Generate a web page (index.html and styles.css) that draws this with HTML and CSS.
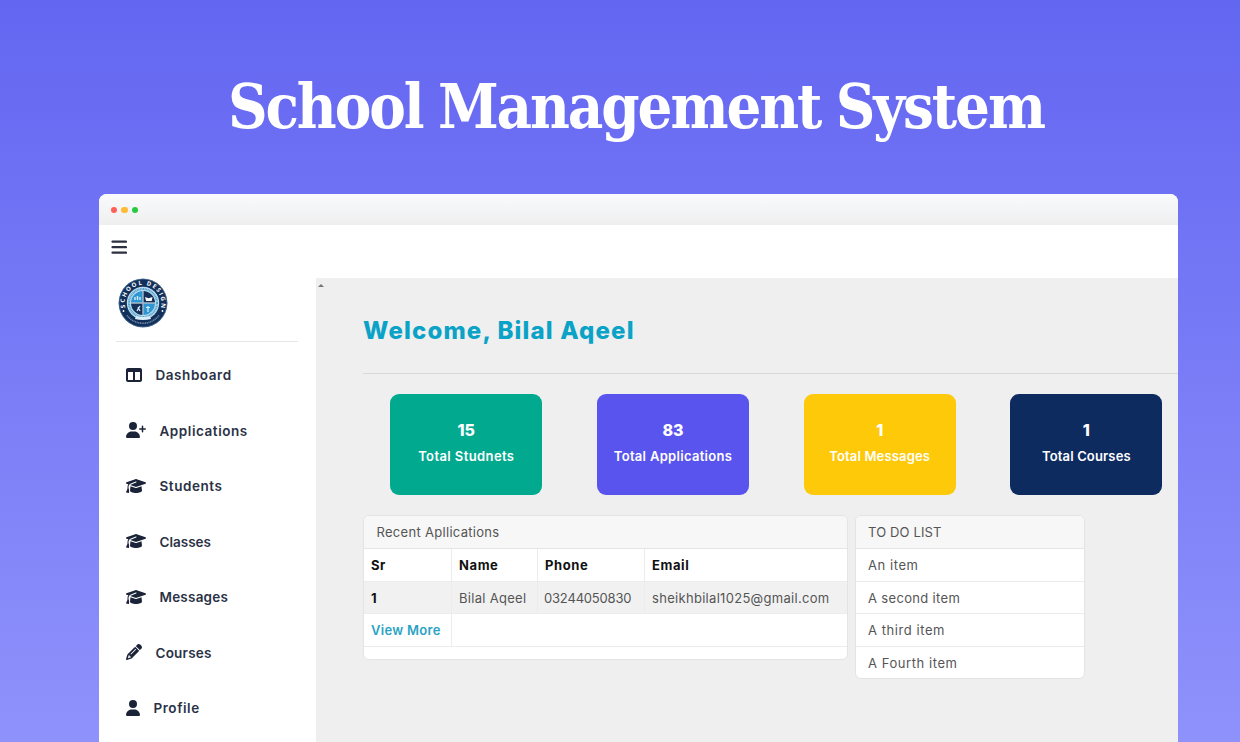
FILE: index.html
```html
<!DOCTYPE html>
<html lang="en">
<head>
<meta charset="utf-8">
<title>School Management System</title>
<link rel="stylesheet" href="styles.css">
</head>
<body>
<svg class="defs" width="0" height="0">
  <symbol id="cap" viewBox="0 0 640 512"><path d="M320 32c-8.1 0-16.1 1.4-23.7 4.1L15.8 137.4C6.3 140.9 0 149.9 0 160s6.3 19.1 15.8 22.6l57.9 20.9C57.3 229.3 48 259.8 48 291.9v28.1c0 28.4-10.8 57.7-22.3 80.8c-6.5 13-13.9 25.8-22.5 37.6C0 442.7-.9 448.3 .9 453.4s6 8.9 11.2 10.2l64 16c4.2 1.1 8.7 .3 12.4-2s6.3-6.1 7.1-10.4c8.6-42.8 4.3-81.2-2.1-108.7C90.3 344.3 86 329.8 80 316.5V291.9c0-30.2 10.2-58.7 27.9-81.5c12.9-15.5 29.6-28 49.2-35.7l157-61.7c8.2-3.2 17.5 .8 20.7 9s-.8 17.5-9 20.7l-157 61.7c-12.4 4.9-23.3 12.4-32.2 21.6l159.6 57.6c7.6 2.7 15.6 4.1 23.7 4.1s16.1-1.4 23.7-4.1L624.2 182.6c9.5-3.4 15.8-12.5 15.8-22.6s-6.3-19.1-15.8-22.6L343.7 36.1C336.1 33.4 328.1 32 320 32zM128 408c0 35.3 86 72 192 72s192-36.7 192-72L496.7 262.6 354.5 314c-11.1 4-22.8 6-34.5 6s-23.5-2-34.5-6L143.3 262.6 128 408z"/></symbol>
</svg>
<h1 class="title">School Management System</h1>
<div class="window">
  <div class="titlebar"><i class="dot red"></i><i class="dot amber"></i><i class="dot green"></i></div>
  <header class="topbar">
    <svg class="burger" viewBox="0 0 16 16"><path d="M1.500 1.700h13.500M1.500 7.200h13.500M1.500 12.700h13.500"/></svg>
  </header>
  <div class="body">
    <aside class="sidebar">
      <svg class="logo" viewBox="0 0 50 50">
        <defs>
          <path id="arcTop" d="M7.500 30.500 A18.300 18.300 0 1 1 42.500 30.500"/>
        </defs>
        <circle cx="25" cy="25" r="24.300" fill="#12305a"/>
        <circle cx="25" cy="25" r="24" fill="none" stroke="#5f87aa" stroke-width=".6"/>
        <circle cx="25" cy="25" r="16.200" fill="#b9dcef"/>
        <circle cx="25" cy="25" r="14" fill="none" stroke="#4d9cc9" stroke-width="2" stroke-dasharray="1 .6"/>
        <path d="M25 25V13A12 12 0 0 0 13 25zM25 25v12a12 12 0 0 0 12-12z" fill="#2e97d3"/>
        <path d="M25 25h12A12 12 0 0 0 25 13zM25 25H13a12 12 0 0 0 12 12z" fill="#142f58"/>
        <path d="M25 13v24M13 25h24" stroke="#a9bac9" stroke-width="1.400"/>
        <path d="M17 22v-3M19.500 22v-4M22 22v-3" stroke="#d5edfa" stroke-width="1.400"/>
        <path d="M27 19l3.500 1.200 4-1.200-.8 4h-5.600z" fill="#fff"/>
        <path d="M22 28l-2 3M20 29l2 4M19 33l1-2M30 28v6M28 29.500h4" stroke="#dceefa" stroke-width="1.200" fill="none"/>
        <path d="M18 38q7 2 14 0l1 3q-8 2-16 0z" fill="#d8edf7"/>
        <circle cx="5.500" cy="33" r=".9" fill="#fff"/><circle cx="44.500" cy="33" r=".9" fill="#fff"/>
        <text class="ring"><textPath href="#arcTop" textLength="66" startOffset="1">SCHOOL DESIGN</textPath></text>
        <path d="M9 37.500A20.400 20.400 0 0 0 41 37.500" fill="none" stroke="#7d96b5" stroke-width="1.500" stroke-dasharray="1 .7"/>
      </svg>
      <nav class="nav">
        <a class="item"><svg class="sq" viewBox="0 0 512 512"><path d="M0 96C0 60.700 28.700 32 64 32H448c35.300 0 64 28.700 64 64V416c0 35.300-28.700 64-64 64H64c-35.300 0-64-28.700-64-64V96zm64 64V416H224V160H64zm384 0H288V416H448V160z"/></svg><span class="wide">Dashboard</span></a>
        <a class="item"><svg viewBox="0 0 640 512"><path d="M96 128a128 128 0 1 1 256 0A128 128 0 1 1 96 128zM0 482.300C0 383.800 79.800 304 178.300 304h91.400C368.200 304 448 383.800 448 482.300c0 16.400-13.300 29.700-29.700 29.700H29.700C13.300 512 0 498.700 0 482.300zM504 312V248H440c-13.300 0-24-10.700-24-24s10.700-24 24-24h64V136c0-13.300 10.700-24 24-24s24 10.700 24 24v64h64c13.300 0 24 10.700 24 24s-10.700 24-24 24H552v64c0 13.300-10.700 24-24 24s-24-10.700-24-24z"/></svg><span class="wide">Applications</span></a>
        <a class="item"><svg><use href="#cap"/></svg><span class="wide">Students</span></a>
        <a class="item"><svg><use href="#cap"/></svg><span class="plain">Classes</span></a>
        <a class="item"><svg><use href="#cap"/></svg><span>Messages</span></a>
        <a class="item"><svg class="sq" viewBox="0 0 512 512"><path d="M410.300 231l11.300-11.300-33.900-33.900-62.100-62.100L291.700 89.800l-11.300 11.300-22.600 22.600L58.600 322.900c-10.400 10.400-18 23.300-22.200 37.400L1 480.700c-2.500 8.400-.2 17.500 6.100 23.700s15.300 8.500 23.700 6.100l120.300-35.400c14.100-4.200 27-11.800 37.400-22.200L387.700 253.700 410.300 231zM160 399.400l-9.100 22.700c-4 3.100-8.500 5.400-13.300 6.900L59.400 452l23-78.100c1.400-4.900 3.800-9.400 6.900-13.300l22.700-9.100v32c0 8.800 7.200 16 16 16h32zM362.700 18.700L348.300 33.200 325.700 55.800 314.300 67.100l33.900 33.900 62.100 62.100 33.900 33.900 11.300-11.300 22.600-22.600 14.500-14.500c25-25 25-65.500 0-90.500L453.300 18.700c-25-25-65.500-25-90.500 0zm-47.400 168l-144 144c-6.200 6.200-16.400 6.200-22.600 0s-6.200-16.400 0-22.600l144-144c6.200-6.200 16.400-6.200 22.600 0s6.200 16.400 0 22.600z"/></svg><span>Courses</span></a>
        <a class="item"><svg class="person" viewBox="0 0 448 512"><path d="M224 256A128 128 0 1 0 224 0a128 128 0 1 0 0 256zm-45.700 48C79.800 304 0 383.800 0 482.300C0 498.700 13.300 512 29.700 512H418.300c16.400 0 29.700-13.300 29.700-29.700C448 383.800 368.200 304 269.700 304H178.300z"/></svg><span class="wide">Profile</span></a>
      </nav>
    </aside>
    <main class="main">
      <i class="scroll-up"></i>
      <h2 class="welcome">Welcome, Bilal Aqeel</h2>
      <section class="stats">
        <div class="stat teal"><b>15</b><span>Total Studnets</span></div>
        <div class="stat violet"><b>83</b><span>Total Applications</span></div>
        <div class="stat yellow"><b>1</b><span>Total Messages</span></div>
        <div class="stat navy"><b>1</b><span>Total Courses</span></div>
      </section>
      <section class="panels">
        <div class="card recent">
          <div class="card-head">Recent Apllications</div>
          <div class="row head"><div>Sr</div><div>Name</div><div>Phone</div><div>Email</div></div>
          <div class="row striped"><div><b>1</b></div><div>Bilal Aqeel</div><div class="phone">03244050830</div><div>sheikhbilal1025@gmail.com</div></div>
          <div class="row"><div><a class="more">View More</a></div><div></div></div>
        </div>
        <div class="card todo">
          <div class="card-head">TO DO LIST</div>
          <div class="entry">An item</div>
          <div class="entry second">A second item</div>
          <div class="entry">A third item</div>
          <div class="entry">A Fourth item</div>
        </div>
      </section>
    </main>
  </div>
</div>
</body>
</html>
```
FILE: styles.css
```css
* { box-sizing: border-box; }
body {
  margin: 0;
  height: 742px;
  overflow: hidden;
  background: linear-gradient(#6366f1, #8f92fb);
  font-family: Inter, "Open Sans", sans-serif;
  font-size: 13px;
}
.defs { display: block; height: 0; }
.title {
  margin: 0;
  height: 194px;
  padding: 71px 0 0 228px;
  font: bold 61px/72px "DejaVu Serif Condensed", "DejaVu Serif", serif;
  font-stretch: condensed;
  letter-spacing: -2.1px;
  word-spacing: -1.5px;
  color: #fff;
  white-space: nowrap;
}
.window {
  width: 1079px;
  height: 548px;
  margin-left: 99px;
  border-radius: 8px 8px 0 0;
  overflow: hidden;
  background: #fff;
}
.titlebar {
  height: 31px;
  padding: 1px 0 0 12px;
  display: flex;
  align-items: center;
  gap: 4px;
  background: linear-gradient(#f9fafc, #efefef);
}
.dot { width: 6.400px; height: 6.400px; border-radius: 50%; }
.red { background: #ff5f57; }
.amber { background: #febc36; }
.green { background: #28c840; }
.topbar { height: 53px; padding: 15px 0 0 12px; }
.burger { width: 16px; height: 16px; display: block; }
.burger path { stroke: #2c3040; stroke-width: 2.200; stroke-linecap: round; }
.body { display: flex; height: 464px; }
.sidebar { width: 217px; flex: none; }
.logo { display: block; width: 50px; height: 50px; margin-left: 19px; }
.ring { font: bold 6px "Open Sans", sans-serif; fill: #fff; }
.nav {
  margin: 13px 18px 0 17px;
  padding: 6px 0 0 10px;
  border-top: 1.500px solid #e6e6e6;
  display: grid;
  grid-auto-rows: 55.500px;
}
.item {
  display: flex;
  align-items: center;
  gap: 13.500px;
  color: #2a3246;
  font-size: 13.500px;
  font-weight: 600;
  letter-spacing: .22px;
}
.item .wide { letter-spacing: .55px; }
.item .plain { letter-spacing: 0; }
.item svg { width: 20px; height: 16px; fill: #1b2338; margin-bottom: 2px; }
.item span { margin-bottom: 1px; }
.item svg.sq { width: 16px; }
.item svg.person { width: 14px; }
.main {
  flex: none;
  width: 862px;
  padding-left: 47px;
  background: #efefef;
  position: relative;
}
.scroll-up {
  position: absolute;
  left: 2px;
  top: 6px;
  border: 3px solid transparent;
  border-top: 0;
  border-bottom: 3px solid #777;
}
.welcome {
  margin: 0;
  height: 96px;
  padding-top: 36px;
  border-bottom: 1.500px solid #d9d9d9;
  color: #0aa2c6;
  font-size: 24px;
  font-weight: 800;
  line-height: 34px;
  letter-spacing: 1.170px;
  white-space: nowrap;
}
.stats { display: flex; gap: 54.700px; padding: 20px 0 0 27.300px; }
.stat {
  flex: none;
  width: 152px;
  height: 101px;
  border-radius: 9px;
  color: #fff;
  display: flex;
  flex-direction: column;
  align-items: center;
  padding-top: 23px;
  line-height: 26px;
  font-weight: 600;
  letter-spacing: .15px;
}
.stat b { font-size: 16px; font-weight: 800; letter-spacing: 0; }
.teal { background: #01a98f; letter-spacing: .4px; }
.violet { background: #5a54ef; letter-spacing: .3px; }
.yellow { background: #fec909; }
.navy { background: #0e2b60; }
.panels { display: flex; align-items: flex-start; gap: 7px; margin-top: 20px; }
.card {
  background: #fff;
  border: 1px solid #e4e4e4;
  border-radius: 6px;
  overflow: hidden;
  color: #555;
  white-space: nowrap;
  letter-spacing: .3px;
}
.recent { width: 485px; height: 144.500px; }
.todo { width: 230px; height: 164px; letter-spacing: .56px; }
.card-head {
  height: 33px;
  line-height: 33px;
  padding-left: 12.500px;
  background: #f7f7f7;
  border-bottom: 1px solid #e4e6e6;
}
.todo .card-head { letter-spacing: .15px; padding-left: 12px; }
.row {
  display: grid;
  grid-template-columns: 87px 86px 107px 1fr;
  height: 32.600px;
  line-height: 32px;
  border-bottom: 1px solid #ececec;
}
.row > div { padding-left: 7px; border-left: 1px solid #ececec; }
.row > div:first-child { border-left: 0; }
.row b, .head { color: #111; font-weight: 700; }
.head { letter-spacing: .6px; }
.row .phone { padding-left: 6px; letter-spacing: -.18px; }
.striped { background: #f1f1f1; }
.more { color: #2aa3c4; font-weight: 600; }
.entry {
  height: 32.600px;
  line-height: 32px;
  padding-left: 12px;
  border-bottom: 1px solid #ececec;
}
.entry.second { letter-spacing: .33px; }
```
